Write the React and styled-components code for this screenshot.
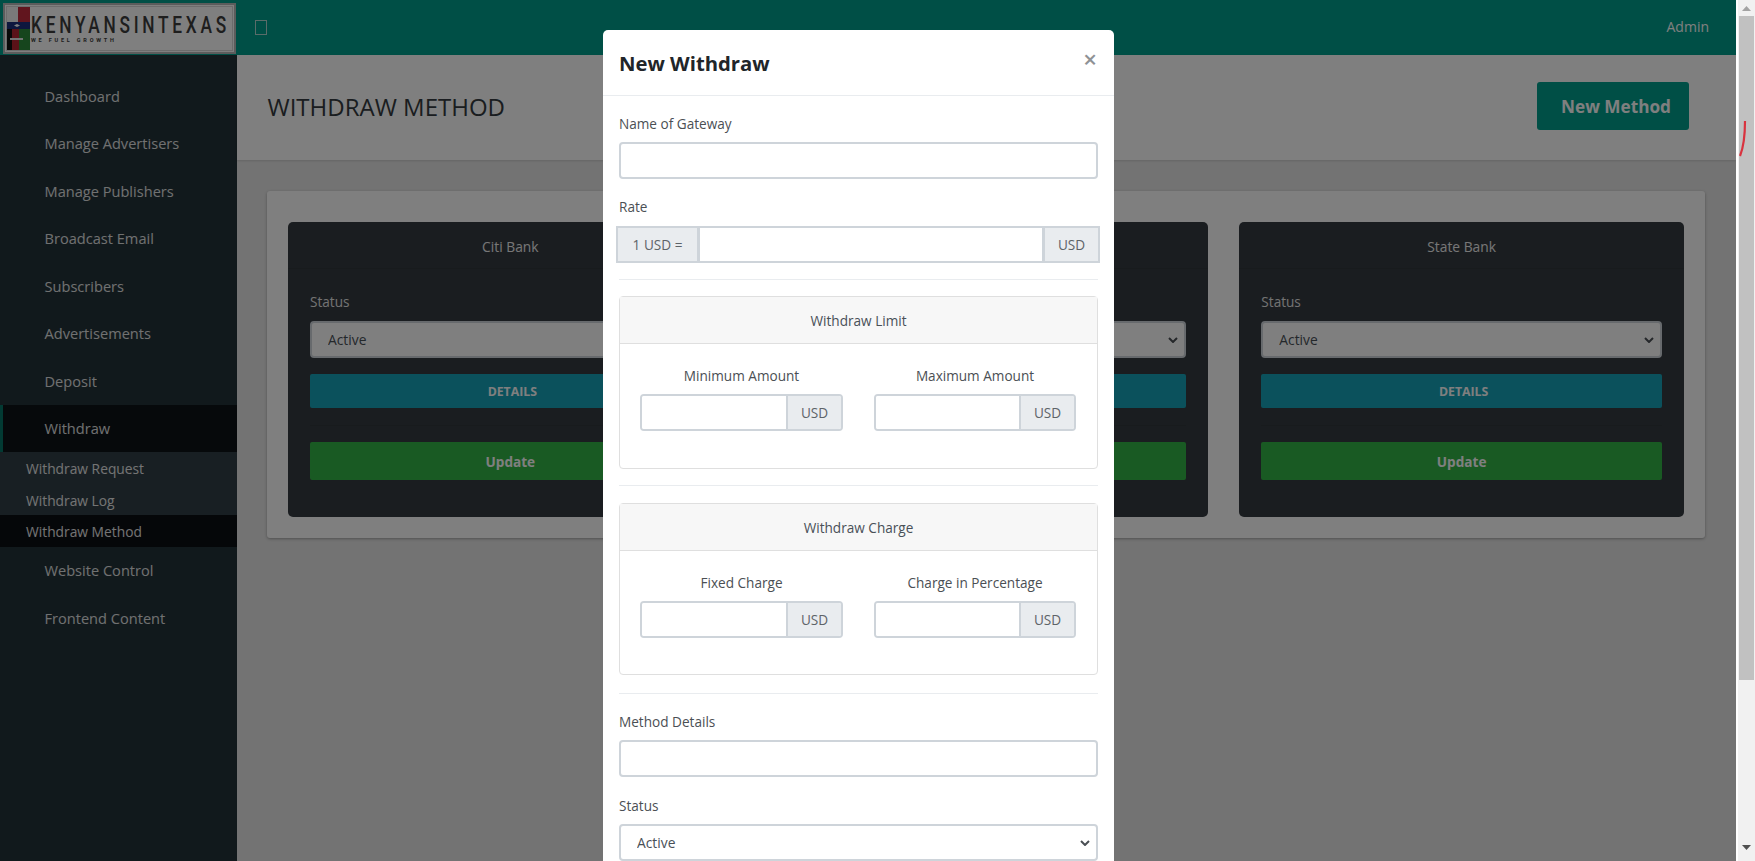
import React from "react";
import styled, { createGlobalStyle } from "styled-components";

const GlobalStyle = createGlobalStyle`
  html, body {
    margin: 0;
    height: 100%;
    overflow: hidden;
    background: #fff;
  }
  * {
    box-sizing: border-box;
  }
  body {
    font-family: "Open Sans", "Noto Sans", "Liberation Sans", sans-serif;
    font-size: 13.6px;
    color: #495057;
  }
`;

const Screen = styled.div`
  display: flex;
  width: 1755px;
  height: 861px;
  overflow: hidden;
`;

const Page = styled.div`
  position: relative;
  width: 1736px;
  height: 861px;
  display: grid;
  grid-template-columns: 237px 1fr;
  grid-template-rows: 55px 1fr;
  overflow: hidden;
  background: #e6e6e6;
`;

const LogoBox = styled.div`
  background: #009e8c;
  padding: 3px 1px 1px 3px;
`;

const LogoFrame = styled.div`
  height: 51px;
  display: flex;
  align-items: center;
  gap: 1px;
  padding: 0 1px;
  background: #fff;
  border: 2px solid #b8b8b8;
  outline: 1px solid #d8d8d8;
  outline-offset: -4px;
`;

const FlagWrap = styled.svg`
  flex: none;
`;

const LogoText = styled.div`
  display: flex;
  flex-direction: column;
  min-width: 0;
  color: #3c3c3c;
  font-family: "Roboto", "Liberation Sans", sans-serif;
`;

const LogoName = styled.span`
  font-size: 24px;
  line-height: 24px;
  font-weight: 500;
  letter-spacing: 5.2px;
  white-space: nowrap;
  transform: scaleX(0.72);
  transform-origin: left center;
`;

const LogoTag = styled.span`
  font-size: 5.5px;
  line-height: 7px;
  font-weight: 700;
  letter-spacing: 2.8px;
  white-space: nowrap;
`;

const TopBar = styled.header`
  background: #009e8c;
  display: flex;
  align-items: center;
  justify-content: space-between;
  padding: 0 27px 0 18px;
  color: #fff;
`;

const MenuGlyph = styled.span`
  display: block;
  width: 12px;
  height: 15px;
  border: 1px solid #b5d8d3;
`;

const AdminLink = styled.span`
  font-size: 14px;
  color: #fff;
  margin-bottom: 3px;
`;

const Sidebar = styled.nav`
  background: #233238;
  padding-top: 17px;
`;

const NavItem = styled.div`
  height: 47.5px;
  display: flex;
  align-items: center;
  font-size: 14.6px;
  color: #fff;
  opacity: 0.86;
  background: ${(d) => (d.$active ? "#0a0e12" : "transparent")};
  border-left: ${(d) => (d.$active ? "3px solid #00806f" : "0")};
  padding-left: ${(d) => (d.$active ? "41.5px" : "44.5px")};
`;

const SubMenu = styled.div`
  background: #303f47;
`;

const SubItem = styled.div`
  height: 31.5px;
  display: flex;
  align-items: center;
  padding: 2px 0 0 26px;
  font-size: 13.8px;
  color: #e8e8e8;
  background: ${(d) => (d.$active ? "#0a0e12" : "transparent")};
`;

const Main = styled.main`
  min-width: 0;
`;

const PageHead = styled.div`
  height: 105px;
  background: #fff;
  display: flex;
  align-items: center;
  justify-content: space-between;
  padding: 0 47px 4px 30.5px;
  box-shadow: 0 1px 2px rgba(0, 0, 0, 0.12);
`;

const PageTitle = styled.h1`
  margin: 2px 0 0;
  font-size: 24px;
  font-weight: 400;
  color: #343a40;
`;

const NewButton = styled.button`
  width: 152px;
  height: 48px;
  padding: 2px 0 0 6px;
  border: 0;
  border-radius: 3px;
  background: #009e8c;
  color: #fff;
  font: 700 17.2px "Open Sans", sans-serif;
`;

const Content = styled.div`
  padding: 31px 31px 0 30px;
`;

const Shell = styled.div`
  background: #fff;
  border-radius: 3px;
  padding: 31px 21px 21px 21px;
  display: grid;
  grid-template-columns: repeat(3, 1fr);
  gap: 31px;
  box-shadow: 0 1px 3px rgba(0, 0, 0, 0.3);
`;

const GatewayCard = styled.div`
  height: 295px;
  background: #343a40;
  border-radius: 5px;
  color: #fff;
`;

const GatewayName = styled.div`
  height: 47px;
  line-height: 50px;
  text-align: center;
  font-size: 13.8px;
  color: #eee;
  border-bottom: 1px solid #30363b;
`;

const GatewayBody = styled.div`
  padding: 22px 22px 0;
`;

const GatewayLabel = styled.div`
  line-height: 21px;
  font-size: 13.6px;
  color: #e6e6e6;
  margin-bottom: 9px;
`;

const SelectWrap = styled.div`
  position: relative;
`;

const SelectBox = styled.select`
  display: block;
  width: 100%;
  height: 37px;
  padding: 0 16px;
  appearance: none;
  font: 13.8px "Open Sans", sans-serif;
  color: #495057;
  background: #fff;
  border: 2px solid #ced4da;
  border-radius: 4px;
`;

const Chevron = styled.svg`
  position: absolute;
  right: 8px;
  top: 16px;
  width: 10px;
  height: 6px;
  pointer-events: none;
`;

const ActionButton = styled.button`
  display: block;
  width: 100%;
  height: ${(d) => d.$h}px;
  margin-top: ${(d) => d.$mt}px;
  padding: ${(d) => d.$pad || "0"};
  border: 0;
  border-radius: 2px;
  background: ${(d) => d.$bg};
  color: #fff;
  font-family: "Open Sans", sans-serif;
  font-weight: 700;
  font-size: ${(d) => d.$fs}px;
`;

const CardRule = styled.div`
  height: 1px;
  margin-top: 17px;
  background: #30363b;
`;

const Backdrop = styled.div`
  position: absolute;
  inset: 0;
  background: rgba(0, 0, 0, 0.5);
`;

const Modal = styled.div`
  position: absolute;
  left: 603px;
  top: 30px;
  width: 511px;
  background: #fff;
  border-radius: 5px 5px 0 0;
`;

const ModalHead = styled.div`
  height: 66px;
  display: flex;
  align-items: flex-start;
  justify-content: space-between;
  padding: 0 17px 0 16px;
  border-bottom: 1px solid #e9ecef;
`;

const ModalTitle = styled.h5`
  margin: 19px 0 0;
  font-size: 20.3px;
  line-height: 28px;
  font-weight: 700;
  color: #212529;
`;

const CloseMark = styled.span`
  margin-top: 15px;
  font-size: 24px;
  line-height: 28px;
  font-weight: 600;
  color: #8f9295;
`;

const ModalBody = styled.div`
  padding: 17px 16px 40px;
`;

const FieldLabel = styled.label`
  display: block;
  line-height: 21px;
  font-size: 13.6px;
  color: #4b4f54;
  margin-top: ${(d) => d.$mt || 0}px;
  margin-bottom: ${(d) => (d.$flush ? 0 : 8)}px;
  text-align: ${(d) => (d.$center ? "center" : "left")};
`;

const TextField = styled.div`
  height: 37px;
  background: #fff;
  border: 2px solid #ced4da;
  border-radius: 4px;
`;

const RateGroup = styled.div`
  display: flex;
  height: 37px;
  margin: 9px -2px 0 -3px;
  border: 2px solid #ced4da;
`;

const RateAddon = styled.span`
  display: flex;
  align-items: center;
  justify-content: center;
  width: ${(d) => d.$w}px;
  background: #e9ecef;
  color: #5d6368;
  font-size: 13.6px;
  border-left: ${(d) => (d.$side === "right" ? "3px solid #ced4da" : "0")};
  border-right: ${(d) => (d.$side === "left" ? "3px solid #ced4da" : "0")};
`;

const RateInput = styled.div`
  flex: 1;
  background: #fff;
`;

const Rule = styled.hr`
  margin: ${(d) => d.$m};
  border: 0;
  border-top: 1px solid #e9ecef;
`;

const LimitCard = styled.section`
  height: 172.5px;
  border: 1px solid #dfdfdf;
  border-radius: 4px;
`;

const LimitHead = styled.div`
  height: 47px;
  line-height: 48px;
  text-align: center;
  font-size: 13.6px;
  color: #495057;
  background: #f7f7f7;
  border-bottom: 1px solid #dfdfdf;
`;

const LimitGrid = styled.div`
  display: grid;
  grid-template-columns: 203px 202px;
  gap: 31px;
  padding: 21px 20px 0;
`;

const AmountGroup = styled.div`
  display: flex;
  height: 37px;
  border: 2px solid #ced4da;
  border-radius: 4px;
  overflow: hidden;
`;

const AmountInput = styled.div`
  flex: 1;
  background: #fff;
`;

const AmountAddon = styled.span`
  width: 55px;
  display: flex;
  align-items: center;
  justify-content: center;
  font-size: 13.6px;
  color: #5d6368;
  background: #e9ecef;
  border-left: 2px solid #ced4da;
`;

const ScrollBar = styled.div`
  width: 19px;
  height: 861px;
  flex: none;
  display: flex;
  flex-direction: column;
  align-items: center;
  background: #f1f1f1;
  border-left: 2px solid #fff;
`;

const ThumbTrack = styled.div`
  position: relative;
  width: 15px;
  height: 664px;
  margin-top: 5px;
  background: #c1c1c1;
`;

const ScrollArrow = styled.svg`
  display: block;
  width: 9px;
  height: 5px;
  margin: ${(d) => d.$m};
`;

const InkMark = styled.svg`
  position: absolute;
  left: 0;
  top: 104px;
  width: 8px;
  height: 38px;
`;

const navTop = [
  "Dashboard",
  "Manage Advertisers",
  "Manage Publishers",
  "Broadcast Email",
  "Subscribers",
  "Advertisements",
  "Deposit",
];

const FlagMark = () => (
  <FlagWrap width="24" height="43" viewBox="0 0 24 43" aria-hidden="true">
    <rect width="12" height="15" fill="#f4f4f4" />
    <rect x="12" width="12" height="15" fill="#c22a3c" />
    <rect y="15" width="24" height="7" fill="#1c2f7c" />
    <polygon points="8,18.5 11,17 14,18.5 11,20" fill="#fff" />
    <rect y="22" width="6" height="21" fill="#111" />
    <rect x="6" y="22" width="7" height="21" fill="#b42530" />
    <rect x="13" y="22" width="11" height="21" fill="#2c8a3a" />
    <rect x="4" y="31" width="13" height="2" fill="#e8e8e8" />
  </FlagWrap>
);

const StatusSelect = () => (
  <SelectWrap>
    <SelectBox defaultValue="Active">
      <option>Active</option>
      <option>Inactive</option>
    </SelectBox>
    <Chevron viewBox="0 0 10 6">
      <path d="M1 1 L5 5 L9 1" stroke="#4a4f54" strokeWidth="2" fill="none" />
    </Chevron>
  </SelectWrap>
);

const WithdrawCard = ({ name }) => (
  <GatewayCard>
    <GatewayName>{name}</GatewayName>
    <GatewayBody>
      <GatewayLabel>Status</GatewayLabel>
      <StatusSelect />
      <ActionButton $h={34} $mt={16} $bg="#17a2b8" $fs={12.3} $pad="0 0 0 4px">
        DETAILS
      </ActionButton>
      <CardRule />
      <ActionButton $h={38} $mt={16} $bg="#32b446" $fs={13.6}>
        Update
      </ActionButton>
    </GatewayBody>
  </GatewayCard>
);

const LimitBox = ({ title, left, right }) => (
  <LimitCard>
    <LimitHead>{title}</LimitHead>
    <LimitGrid>
      {[left, right].map((label) => (
        <div key={label}>
          <FieldLabel $center>{label}</FieldLabel>
          <AmountGroup>
            <AmountInput />
            <AmountAddon>USD</AmountAddon>
          </AmountGroup>
        </div>
      ))}
    </LimitGrid>
  </LimitCard>
);

export default function App() {
  return (
    <Screen>
      <GlobalStyle />
      <Page>
        <LogoBox>
          <LogoFrame>
            <FlagMark />
            <LogoText>
              <LogoName>KENYANSINTEXAS</LogoName>
              <LogoTag>WE FUEL GROWTH</LogoTag>
            </LogoText>
          </LogoFrame>
        </LogoBox>
        <TopBar>
          <MenuGlyph />
          <AdminLink>Admin</AdminLink>
        </TopBar>
        <Sidebar>
          {navTop.map((item) => (
            <NavItem key={item}>{item}</NavItem>
          ))}
          <NavItem $active>Withdraw</NavItem>
          <SubMenu>
            <SubItem>Withdraw Request</SubItem>
            <SubItem>Withdraw Log</SubItem>
            <SubItem $active>Withdraw Method</SubItem>
          </SubMenu>
          <NavItem>Website Control</NavItem>
          <NavItem>Frontend Content</NavItem>
        </Sidebar>
        <Main>
          <PageHead>
            <PageTitle>WITHDRAW METHOD</PageTitle>
            <NewButton>New Method</NewButton>
          </PageHead>
          <Content>
            <Shell>
              <WithdrawCard name="Citi Bank" />
              <WithdrawCard name="Bank of America" />
              <WithdrawCard name="State Bank" />
            </Shell>
          </Content>
        </Main>
        <Backdrop />
        <Modal>
          <ModalHead>
            <ModalTitle>New Withdraw</ModalTitle>
            <CloseMark>×</CloseMark>
          </ModalHead>
          <ModalBody>
            <FieldLabel>Name of Gateway</FieldLabel>
            <TextField />
            <FieldLabel $mt={17} $flush>
              Rate
            </FieldLabel>
            <RateGroup>
              <RateAddon $w={82} $side="left">
                1 USD =
              </RateAddon>
              <RateInput />
              <RateAddon $w={56} $side="right">
                USD
              </RateAddon>
            </RateGroup>
            <Rule $m="16px 0" />
            <LimitBox title="Withdraw Limit" left="Minimum Amount" right="Maximum Amount" />
            <Rule $m="16px 0 17px" />
            <LimitBox title="Withdraw Charge" left="Fixed Charge" right="Charge in Percentage" />
            <Rule $m="18px 0 17px" />
            <FieldLabel>Method Details</FieldLabel>
            <TextField />
            <FieldLabel $mt={18}>Status</FieldLabel>
            <StatusSelect />
          </ModalBody>
        </Modal>
      </Page>
      <ScrollBar>
        <ScrollArrow $m="6px 0 0" viewBox="0 0 9 5">
          <polygon points="0,5 4.5,0 9,5" fill="#a3a3a3" />
        </ScrollArrow>
        <ThumbTrack>
          <InkMark viewBox="0 0 8 38">
            <path d="M6 1 C6 14 5 26 1 36" stroke="#d9333f" strokeWidth="2.2" fill="none" />
          </InkMark>
        </ThumbTrack>
        <ScrollArrow $m="auto 0 11px" viewBox="0 0 9 5">
          <polygon points="0,0 9,0 4.5,5" fill="#505050" />
        </ScrollArrow>
      </ScrollBar>
    </Screen>
  );
}
